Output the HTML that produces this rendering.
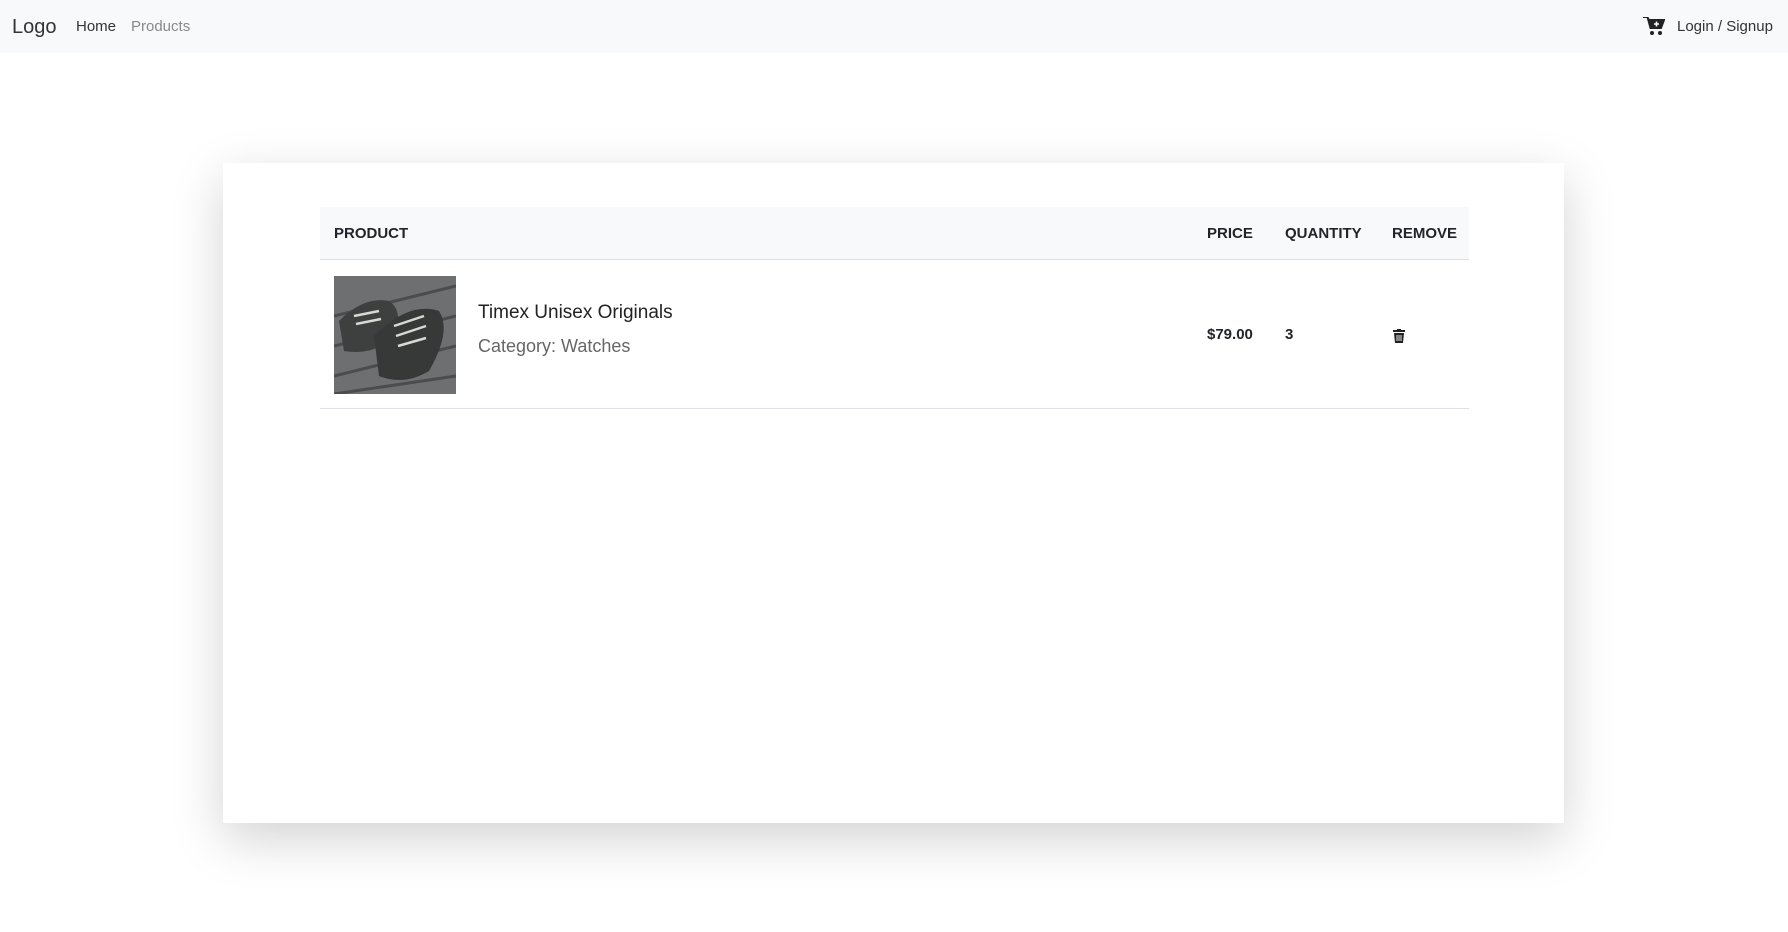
<!DOCTYPE html>
<html><head><meta charset="utf-8"><style>
*{box-sizing:border-box;margin:0;padding:0}
body{width:1788px;height:932px;background:#fff;font-family:"Liberation Sans",sans-serif;color:#212529;position:relative;overflow:hidden}
.nav{position:absolute;left:0;top:0;width:1788px;height:53px;background:#f8f9fa}
.nav span{position:absolute;top:1px;line-height:52px}
.card{position:absolute;left:223px;top:163px;width:1341px;height:660px;background:#fff;box-shadow:0 16px 48px rgba(0,0,0,.175)}
.th{position:absolute;left:320px;top:207px;width:1149px;height:53px;background:#f8f9fa;border-bottom:1px solid #dee2e6}
.h{position:absolute;top:0;line-height:53px;font-weight:bold;font-size:15px;color:#212529}
.row{position:absolute;left:320px;top:260px;width:1149px;height:149px;border-bottom:1px solid #dee2e6}
</style></head><body>
<div class="nav">
<span style="left:12px;font-size:20px;color:#333">Logo</span>
<span style="left:76px;font-size:15px;color:#333">Home</span>
<span style="left:131px;font-size:15px;color:#888">Products</span>
<svg style="position:absolute;left:1643px;top:17px" width="22" height="19" viewBox="0 0 22 19"><path d="M0 0h4.5l3 11h10.5l3-8H5.5L5 1" fill="none" stroke="#222" stroke-width="2"/><path d="M6 3h15l-3 8H8z" fill="#222"/><circle cx="9" cy="16" r="2" fill="#222"/><circle cx="17" cy="16" r="2" fill="#222"/><path d="M13.5 4.5v5M11 7h5" stroke="#fff" stroke-width="1.6"/></svg>
<span style="left:1677px;font-size:15px;color:#333">Login / Signup</span>
</div>
<div class="card"></div>
<div class="th">
<span class="h" style="left:14px">PRODUCT</span>
<span class="h" style="left:887px">PRICE</span>
<span class="h" style="left:965px">QUANTITY</span>
<span class="h" style="left:1072px">REMOVE</span>
</div>
<div class="row">
<svg style="position:absolute;left:14px;top:16px" width="122" height="118" viewBox="0 0 122 118">
<rect width="122" height="118" fill="#6d6f70"/>
<path d="M0 40L122 10M0 70L122 40M0 100L122 70M0 118L122 100" stroke="#4a4c4d" stroke-width="3"/>
<path d="M5 45Q30 20 55 25Q70 35 60 60Q40 80 10 75Z" fill="#3d403e"/>
<path d="M40 60Q75 25 105 35Q118 55 95 95Q70 110 45 100Z" fill="#363937"/>
<path d="M20 40l25-5M22 48l25-5M60 50l30-10M62 60l30-10M64 70l28-8" stroke="#d8d8d5" stroke-width="2.5"/>
</svg>
<span style="position:absolute;left:158px;top:39px;line-height:28px;font-size:19px;color:#222">Timex Unisex Originals</span>
<span style="position:absolute;left:158px;top:72px;line-height:28px;font-size:18px;color:#666;font-weight:300">Category: Watches</span>
<span class="h" style="left:887px;line-height:149px;font-size:15px">$79.00</span>
<span class="h" style="left:965px;line-height:149px;font-size:15px">3</span>
<svg style="position:absolute;left:1073px;top:69px" width="12" height="14" viewBox="0 0 12 14"><rect x="0" y="1" width="12" height="2" fill="#222"/><rect x="4" y="0" width="4" height="2" fill="#222"/><path d="M1 4h10l-1 10H2z" fill="#222"/><path d="M4 6v6M6 6v6M8 6v6" stroke="#fff" stroke-width=".9"/></svg>
</div>
</body></html>
